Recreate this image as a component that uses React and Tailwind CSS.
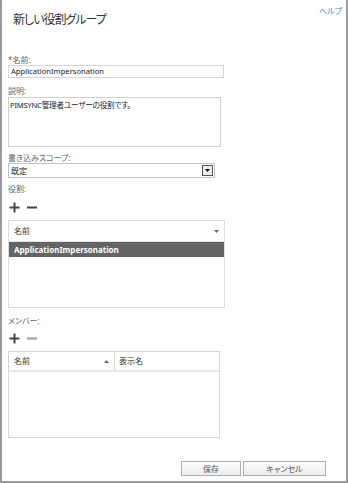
import React from "react";

const jp = "font-['Noto_Sans','Noto_Sans_CJK_JP',sans-serif] [font-feature-settings:'palt']";

function Plus({ color = "#444" }) {
  return (
    <svg width="11" height="11" viewBox="0 0 11 11">
      <path d="M5.5 0.5v10M0.5 5.5h10" stroke={color} strokeWidth="2" />
    </svg>
  );
}

function Minus({ color = "#444" }) {
  return (
    <svg width="10" height="11" viewBox="0 0 10 11">
      <path d="M0 5.5h10" stroke={color} strokeWidth="2" />
    </svg>
  );
}

function Label({ children, className = "" }) {
  return (
    <div className={`h-[10px] leading-[10px] text-[8px] text-[#666] ${className}`}>{children}</div>
  );
}

function App() {
  return (
    <div className={`w-[348px] h-[483px] bg-white flex flex-col border-l-2 border-r-2 border-b-2 border-[#9a9a9a] ${jp}`}>

      <div className="h-[54px] flex justify-between pl-[11px] pr-[4px]">
        <h1 className="mt-[13px] text-[12px] leading-[14px] text-[#333] tracking-[-1px]">新しい役割グループ</h1>
        <a className="mt-[6px] text-[8px] leading-[10px] text-[#3b8fd9]">ヘルプ</a>
      </div>

      <div className="px-[6px] flex flex-col">

        <div className="h-[11px] leading-[11px] text-[8px] text-[#666]">*名前:</div>
        <div className="w-[216px] h-[13px] border border-[#d6d6d6] flex items-center px-[2px] text-[7.6px] text-[#222]">
          ApplicationImpersonation
        </div>

        <div className="mt-[7px] h-[12px] leading-[12px] text-[8px] text-[#666]">説明:</div>
        <div className="w-[213px] h-[50px] border border-[#cfcfcf] px-[1px] pt-[2px] text-[7.6px] leading-[10px] text-[#222] tracking-[-0.2px]">
          PIMSYNC管理者ユーザーの役割です。
        </div>

        <Label className="mt-[6px]">書き込みスコープ:</Label>
        <div className="w-[207px] h-[15px] border border-[#c4c4c4] flex items-center justify-between pl-[2px] pr-[1px]">
          <span className="text-[8px] text-[#222]">既定</span>
          <div className="w-[11px] h-[11px] border border-[#555] bg-[#ececec] flex items-center justify-center">
            <svg width="5" height="3" viewBox="0 0 5 3">
              <path d="M0 0h5L2.5 3z" fill="#111" />
            </svg>
          </div>
        </div>

        <Label className="mt-[6px]">役割:</Label>
        <div className="mt-[7px] h-[12px] flex items-center gap-[7px] pl-[1px]">
          <Plus />
          <Minus />
        </div>

        <div className="mt-[7px] w-[217px] h-[88px] border border-[#d9dddd] flex flex-col">
          <div className="h-[21px] flex items-center justify-between pl-[5px] pr-[5px] border-b border-[#e3e3e3]">
            <span className="text-[8px] text-[#333]">名前</span>
            <svg width="5" height="3" viewBox="0 0 5 3">
              <path d="M0 0h5L2.5 3z" fill="#666" />
            </svg>
          </div>
          <div className="h-[15px] bg-[#646464] flex items-center pl-[5px] text-[8px] font-bold text-white">
            ApplicationImpersonation
          </div>
        </div>

        <Label className="mt-[8px]">メンバー:</Label>
        <div className="mt-[6px] h-[12px] flex items-center gap-[7px] pl-[1px]">
          <Plus />
          <Minus color="#9a9a9a" />
        </div>

        <div className="mt-[7px] w-[212px] h-[87px] border border-[#d6d6d6] flex flex-col">
          <div className="h-[20px] flex border-b-2 border-[#e6e6e6]">
            <div className="w-[106px] flex items-center justify-between pl-[5px] pr-[5px] border-r border-[#d6d6d6]">
              <span className="text-[8px] text-[#333]">名前</span>
              <svg width="5" height="3" viewBox="0 0 5 3">
                <path d="M2.5 0L5 3H0z" fill="#666" />
              </svg>
            </div>
            <div className="flex items-center pl-[4px] text-[8px] text-[#333]">表示名</div>
          </div>
        </div>
      </div>

      <div className="flex-1" />

      <div className="flex justify-end gap-[2px] pr-[20px] pb-[5px]">
        <button className="w-[60px] h-[15px] border border-[#adadad] bg-gradient-to-b from-[#fbfbfb] to-[#ececec] text-[8px] leading-[13px] text-[#555]">保存</button>
        <button className="w-[83px] h-[15px] border border-[#adadad] bg-gradient-to-b from-[#fbfbfb] to-[#ececec] text-[8px] leading-[13px] text-[#555]">キャンセル</button>
      </div>
    </div>
  );
}

export default App;
